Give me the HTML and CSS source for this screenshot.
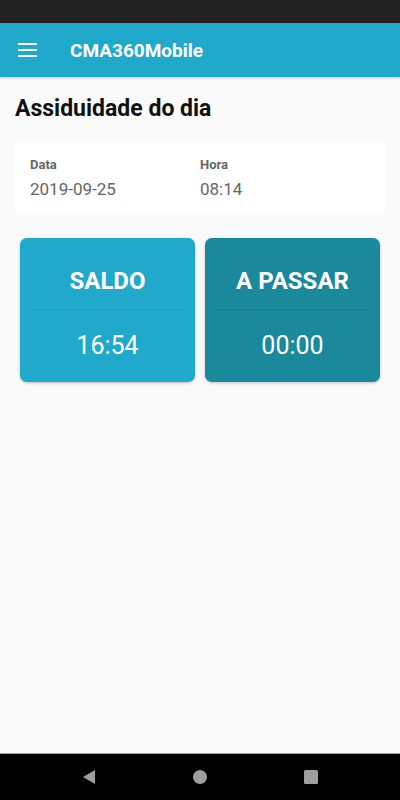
FILE: index.html
```html
<!DOCTYPE html>
<html>
<head>
    <meta name="viewport" content="width=device-width, initial-scale=1">
    <link rel="stylesheet" href="styles.css">
</head>
<body>
<div class="statusbar"></div>
<div class="toolbar">
    <svg class="menu" width="20" height="16" viewBox="0 0 20 16">
        <rect x="0" y="1" width="19" height="2" fill="#fff"/>
        <rect x="0" y="7" width="19" height="2" fill="#fff"/>
        <rect x="0" y="13" width="19" height="2" fill="#fff"/>
    </svg>
    <span class="title">CMA360Mobile</span>
</div>
<div class="content">
    <h1 class="heading">Assiduidade do dia</h1>
    <div class="card">
        <div class="field">
            <div class="label">Data</div>
            <div class="value">2019-09-25</div>
        </div>
        <div class="field">
            <div class="label">Hora</div>
            <div class="value">08:14</div>
        </div>
    </div>
    <div class="tiles">
        <div class="tile saldo">
            <div class="tileTitle">SALDO</div>
            <div class="tileValue">16:54</div>
        </div>
        <div class="tile passar">
            <div class="tileTitle">A PASSAR</div>
            <div class="tileValue">00:00</div>
        </div>
    </div>
</div>
<div class="navbar">
    <svg width="16" height="16" viewBox="0 0 16 16"><polygon points="14,1 14,15 2,8" fill="#9e9e9e"/></svg>
    <svg width="16" height="16" viewBox="0 0 16 16"><circle cx="8" cy="8" r="7" fill="#9e9e9e"/></svg>
    <svg width="16" height="16" viewBox="0 0 16 16"><rect x="1" y="1" width="14" height="14" rx="1.5" fill="#9e9e9e"/></svg>
</div>
</body>
</html>
```
FILE: styles.css
```css
* {
    box-sizing: border-box;
}

body {
    margin: 0;
    height: 800px;
    display: flex;
    flex-direction: column;
    background-color: #fafafa;
    font-family: Roboto, "Liberation Sans", sans-serif;
}

.statusbar {
    height: 23px;
    background-color: #222222;
}

.toolbar {
    height: 54px;
    background-color: #21a9cc;
    display: flex;
    align-items: center;
    padding-left: 18px;
    box-shadow: 0 1px 3px rgba(0, 0, 0, 0.2);
    position: relative;
}

.menu {
    margin-top: -1px;
}

.title {
    color: #fff;
    font-size: 19px;
    font-weight: bold;
    margin-left: 32px;
}

.content {
    flex: 1;
    padding: 0 15px;
}

.heading {
    margin: 19px 0 0 0;
    font-size: 23px;
    font-weight: bold;
    color: #111;
    line-height: 26px;
}

.card {
    margin-top: 19px;
    background-color: #fff;
    border-radius: 4px;
    height: 72px;
    display: flex;
    padding: 16px 15px 0 15px;
}

.field {
    width: 170px;
}

.label {
    font-size: 13px;
    font-weight: bold;
    color: #666;
    line-height: 16px;
}

.value {
    font-size: 17px;
    color: #666;
    line-height: 24px;
    margin-top: 4px;
}

.tiles {
    display: flex;
    gap: 10px;
    margin: 25px 5px 0 5px;
}

.tile {
    flex: 1;
    height: 144px;
    border-radius: 7px;
    color: #fff;
    text-align: center;
    padding: 0 9px;
    box-shadow: 0 1px 3px rgba(0, 0, 0, 0.25);
}

.saldo {
    background-color: #21a9cc;
}

.passar {
    background-color: #1a899b;
}

.tileTitle {
    font-size: 24px;
    font-weight: bold;
    height: 72px;
    line-height: 86px;
    border-bottom: 1px solid rgba(0, 0, 0, 0.08);
}

.tileValue {
    font-size: 25px;
    line-height: 64px;
    padding-top: 4px;
}

.navbar {
    height: 47px;
    background-color: #000;
    border-top: 1px solid #9e9e9e;
    display: flex;
    justify-content: center;
    align-items: center;
    gap: 95px;
}
```
